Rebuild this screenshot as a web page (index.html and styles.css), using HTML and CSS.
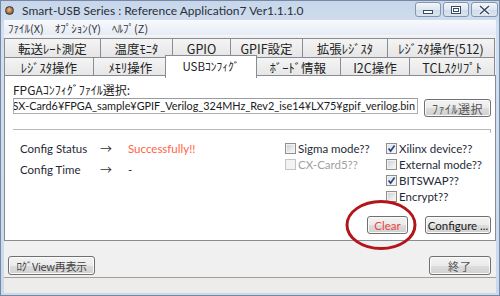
FILE: index.html
```html
<!DOCTYPE html>
<html lang="ja">
<head>
<meta charset="utf-8">
<title>Smart-USB Series</title>
<link rel="stylesheet" href="styles.css">
</head>
<body>
<div class="window">
  <div class="titlebar">
    <span class="appicon"></span>
    <span class="title">Smart-USB Series : Reference Application7 Ver1.1.1.0</span>
    <div class="caption">
      <span class="cbtn cbtn-min"><svg width="12" height="6" viewBox="0 0 12 6"><rect x="1.5" y="1.5" width="9" height="3" fill="#fff" stroke="#3b4a63"/></svg></span>
      <span class="cbtn cbtn-max"><svg width="12" height="10" viewBox="0 0 12 10"><rect x="1.5" y="1.5" width="9" height="7" fill="#fff" stroke="#3b4a63"/><rect x="3.5" y="3.5" width="5" height="3" fill="none" stroke="#3b4a63"/></svg></span>
      <span class="cbtn cbtn-close"><svg width="13" height="10" viewBox="0 0 13 10"><path d="M2 1 L11 9 M11 1 L2 9" stroke="#fff" stroke-width="3.4"/><path d="M2 1 L11 9 M11 1 L2 9" stroke="#3b4a63" stroke-width="1.6"/></svg></span>
    </div>
  </div>
  <div class="client">
    <div class="menubar">
      <span class="menu">ﾌｧｲﾙ(X)</span>
      <span class="menu">ｵﾌﾟｼｮﾝ(Y)</span>
      <span class="menu">ﾍﾙﾌﾟ(Z)</span>
    </div>
    <div class="tabs">
      <div class="tabrow row1">
        <span class="tab">転送ﾚｰﾄ測定</span>
        <span class="tab">温度ﾓﾆﾀ</span>
        <span class="tab">GPIO</span>
        <span class="tab">GPIF設定</span>
        <span class="tab">拡張ﾚｼﾞｽﾀ</span>
        <span class="tab">ﾚｼﾞｽﾀ操作(512)</span>
      </div>
      <div class="tabrow row2">
        <span class="tab">ﾚｼﾞｽﾀ操作</span>
        <span class="tab">ﾒﾓﾘ操作</span>
        <span class="tab active">USBｺﾝﾌｨｸﾞ</span>
        <span class="tab">ﾎﾞｰﾄﾞ情報</span>
        <span class="tab">I2C操作</span>
        <span class="tab">TCLｽｸﾘﾌﾟﾄ</span>
      </div>
    </div>
    <div class="panel">
      <div class="label">FPGAｺﾝﾌｨｸﾞﾌｧｲﾙ選択:</div>
      <div class="filerow">
        <div class="textbox"><span class="path">SX-Card6¥FPGA_sample¥GPIF_Verilog_324MHz_Rev2_ise14¥LX75¥gpif_verilog.bin</span></div>
        <span class="btn btn-file">ﾌｧｲﾙ選択</span>
      </div>
      <div class="sep"></div>
      <div class="middle">
        <div class="status">
          <span class="st-label">Config Status</span><span class="arrow">→</span><span class="st-ok">Successfully!!</span>
          <span class="st-label">Config Time</span><span class="arrow">→</span><span class="st-val">-</span>
        </div>
        <div class="checks">
          <span class="chk"><span class="box"></span>Sigma mode??</span>
          <span class="chk"><span class="box checked"><svg width="9" height="9" viewBox="0 0 9 9"><path d="M1.5 4.5 L3.6 7 L7.6 1.4" fill="none" stroke="#2a4586" stroke-width="1.7"/></svg></span>Xilinx device??</span>
          <span class="chk disabled"><span class="box"></span>CX-Card5??</span>
          <span class="chk"><span class="box"></span>External mode??</span>
          <span class="chk"></span>
          <span class="chk"><span class="box checked"><svg width="9" height="9" viewBox="0 0 9 9"><path d="M1.5 4.5 L3.6 7 L7.6 1.4" fill="none" stroke="#2a4586" stroke-width="1.7"/></svg></span>BITSWAP??</span>
          <span class="chk"></span>
          <span class="chk"><span class="box"></span>Encrypt??</span>
        </div>
      </div>
      <div class="actions">
        <span class="btn btn-clear">Clear</span>
        <span class="btn btn-conf">Configure ...</span>
      </div>
    </div>
    <div class="bottombar">
      <span class="btn btn-log">ﾛｸﾞView再表示</span>
      <span class="btn btn-exit">終了</span>
    </div>
    <div class="statusbar"></div>
  </div>
  <svg class="annot" width="78" height="56" viewBox="0 0 78 56"><ellipse cx="39" cy="28" rx="34" ry="23.5" fill="none" stroke="#b3161a" stroke-width="3"/></svg>
</div>
</body>
</html>
```

FILE: styles.css
```css
html, body {
  margin: 0;
  padding: 0;
}
body {
  width: 500px;
  height: 296px;
  overflow: hidden;
  background: #c9d7e9;
  font-family: "Lato", "Noto Sans CJK JP", sans-serif;
  color: #222;
}
.window {
  position: relative;
  width: 500px;
  height: 296px;
  box-sizing: border-box;
  border: 1px solid #7588a4;
  padding: 0 3px 2px 3px;
  background: linear-gradient(#c7d6ea, #d3dff0 30px, #cbd9ec);
  display: flex;
  flex-direction: column;
}
.titlebar {
  height: 19px;
  display: flex;
  align-items: center;
  flex: none;
}
.appicon {
  width: 9px;
  height: 9px;
  margin-left: 1px;
  border-radius: 50%;
  box-sizing: border-box;
  border: 1px solid #3d3530;
  background: radial-gradient(circle at 45% 40%, #e6c08e, #a8703e 55%, #4e3a2c);
}
.title {
  margin-left: 8px;
  font-size: 12px;
  color: #2a2f38;
  white-space: nowrap;
}
.caption {
  margin-left: auto;
  margin-right: -2px;
  align-self: flex-start;
  margin-top: 1px;
  display: flex;
  gap: 2px;
}
.cbtn {
  height: 15px;
  width: 26px;
  box-sizing: border-box;
  border: 1px solid #8596ae;
  border-radius: 3px;
  background: linear-gradient(#f4f7fb, #dde6f1 50%, #cfdbea 51%, #dbe5f1);
  display: flex;
  align-items: center;
  justify-content: center;
}
.cbtn-min svg { margin-top: 4px; }
.cbtn-close { width: 27px; }
.client {
  flex: 1;
  display: flex;
  flex-direction: column;
  background: #f0f0f0;
}
.menubar {
  height: 16px;
  flex: none;
  display: flex;
  align-items: center;
  gap: 11px;
  padding-left: 4px;
  background: linear-gradient(#f7f9fd, #e6ecf5);
  border-bottom: 1px solid #f3f5f9;
  box-sizing: border-box;
}
.menu {
  font-family: "Noto Sans CJK JP", sans-serif;
  font-size: 11px;
  line-height: 14px;
  color: #333;
}
.tabs {
  margin-top: 2px;
  flex: none;
}
.tabrow {
  display: grid;
}
.row1 {
  height: 19px;
  grid-template-columns: 96px 72px 58px 72px 85px 108px;
}
.row2 {
  height: 18px;
  grid-template-columns: 89px 74px 88px 85px 69px 86px;
}
.tab {
  box-sizing: border-box;
  border-top: 1px solid #898c95;
  border-left: 1px solid #898c95;
  background: linear-gradient(#f4f4f4, #e5e5e5);
  font-family: "Noto Sans CJK JP", sans-serif;
  font-size: 12.5px;
  color: #222;
  display: flex;
  align-items: center;
  justify-content: center;
  white-space: nowrap;
}
.tab:last-child {
  border-right: 1px solid #898c95;
}
.tab.active {
  position: relative;
  z-index: 2;
  margin: -2px -2px -1px -2px;
  background: #fff;
  border-right: 1px solid #898c95;
  font-size: 11.5px;
  padding-bottom: 2px;
}
.panel {
  height: 166px;
  flex: none;
  box-sizing: border-box;
  border: 1px solid #898c95;
  background: #fff;
  padding: 8px 3px 0 8px;
  display: flex;
  flex-direction: column;
}
.label {
  height: 12px;
  line-height: 12px;
  font-family: "Noto Sans CJK JP", sans-serif;
  font-size: 12px;
  color: #222;
  white-space: nowrap;
}
.filerow {
  margin-top: 2px;
  display: flex;
  align-items: flex-start;
  gap: 6px;
}
.textbox {
  width: 405px;
  height: 16px;
  box-sizing: border-box;
  border: 1px solid #abadb3;
  border-top-color: #9a9ca4;
  overflow: hidden;
  display: flex;
  justify-content: flex-end;
  align-items: center;
  padding-right: 2px;
}
.path {
  font-size: 10.85px;
  white-space: nowrap;
  color: #1a1a1a;
  line-height: 14px;
}
.btn {
  box-sizing: border-box;
  height: 18px;
  border: 1px solid #707070;
  border-radius: 3px;
  background: linear-gradient(#f3f3f3, #ebebeb 50%, #dddddd 51%, #d0d0d0);
  box-shadow: inset 0 0 0 1px #fbfbfb;
  display: flex;
  align-items: center;
  justify-content: center;
  font-size: 11.5px;
  color: #222;
  white-space: nowrap;
}
.btn-file {
  width: 67px;
  margin-top: 1px;
  font-family: "Noto Sans CJK JP", sans-serif;
  font-size: 12px;
  letter-spacing: 0.5px;
  color: #555;
}
.sep {
  margin-top: 12px;
  margin-right: 1px;
  height: 4px;
  box-sizing: border-box;
  border-top: 1px solid #b8b8b8;
  border-right: 1px solid #b8b8b8;
}
.middle {
  margin-top: 7px;
  display: flex;
}
.status {
  width: 272px;
  box-sizing: border-box;
  padding-left: 7px;
  display: grid;
  grid-template-columns: 80px 28px auto;
  grid-auto-rows: 16px;
  row-gap: 5px;
  align-content: start;
  align-items: center;
  font-size: 11.5px;
}
.st-label {
  color: #1f2a38;
}
.arrow {
  font-family: "Noto Sans CJK JP", sans-serif;
  font-size: 12px;
  color: #333;
}
.st-ok {
  color: #ff6347;
}
.st-val {
  color: #333;
}
.checks {
  display: grid;
  grid-template-columns: 101px auto;
  grid-auto-rows: 16px;
}
.chk {
  display: flex;
  align-items: center;
  gap: 2px;
  font-size: 11.5px;
  color: #1f2a38;
  white-space: nowrap;
}
.box {
  width: 11px;
  height: 11px;
  box-sizing: border-box;
  border: 1px solid #8e8f8f;
  background: linear-gradient(135deg, #c9ccd1, #eeeeee 70%, #f7f7f7);
  box-shadow: inset 0 0 0 1px #f2f2f2;
  display: flex;
  align-items: center;
  justify-content: center;
}
.box.checked {
  background: linear-gradient(135deg, #dfe3e8, #f8f8f8);
}
.chk.disabled {
  color: #a0a0a0;
}
.chk.disabled .box {
  border-color: #c5c5c5;
  background: #f4f4f4;
}
.actions {
  margin-top: 12px;
  padding-right: 1px;
  display: flex;
  justify-content: flex-end;
  gap: 17px;
}
.btn-clear {
  width: 41px;
  color: #ee4444;
}
.btn-conf {
  width: 66px;
  color: #1a1a1a;
}
.bottombar {
  height: 36px;
  flex: none;
  box-sizing: border-box;
  padding: 15px 5px 0 4px;
  display: flex;
  justify-content: space-between;
  align-items: flex-start;
}
.btn-log {
  width: 87px;
  height: 19px;
  font-family: "Noto Sans CJK JP", sans-serif;
  font-size: 11px;
  letter-spacing: -0.4px;
  color: #444;
}
.btn-exit {
  width: 62px;
  height: 19px;
  font-family: "Noto Sans CJK JP", sans-serif;
  font-size: 11px;
  letter-spacing: 1px;
  color: #555;
}
.statusbar {
  flex: 1;
  border-top: 1px solid #a0a0a0;
  background: #eeecea;
}
.annot {
  position: absolute;
  left: 341px;
  top: 196px;
}
```
